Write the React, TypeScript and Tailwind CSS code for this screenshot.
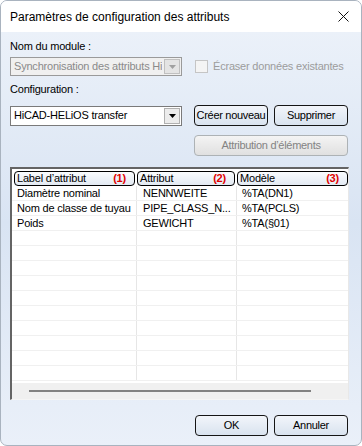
import React from "react";

const F = { fontFamily: '"Liberation Sans", Arial, sans-serif' };

function Arrow() {
  return (
    <svg width="7" height="4" viewBox="0 0 7 4">
      <path d="M0 0h7L3.5 4z" fill="currentColor" />
    </svg>
  );
}

function Btn({ children, disabled, w }: { children: React.ReactNode; disabled?: boolean; w: string }) {
  return (
    <div
      className={`${w} h-[21px] flex items-center justify-center rounded-[4px] border text-[11px] whitespace-nowrap tracking-[-0.3px] ${
        disabled
          ? "border-[#adb2b5] text-[#838383] bg-gradient-to-b from-[#f4f4f4] to-[#e0e0e0]"
          : "border-[#151515] text-black bg-gradient-to-b from-[#f2f5fa] to-[#d9e3ef]"
      }`}
    >
      {children}
    </div>
  );
}

function Header({ label, num, w }: { label: string; num: string; w: string }) {
  return (
    <div className={`${w} h-[15px] flex items-center justify-between border border-black rounded-[4px] px-[2px] bg-gradient-to-b from-[#fafcfe] to-[#e3eaf3] text-[11px]`}>
      <span>{label}</span>
      <span className="text-[#e00000] font-bold pr-[6px]">{num}</span>
    </div>
  );
}

const rows = [
  ["Diamètre nominal", "NENNWEITE", "%TA(DN1)"],
  ["Nom de classe de tuyau", "PIPE_CLASS_N...", "%TA(PCLS)"],
  ["Poids", "GEWICHT", "%TA(§01)"],
  ["", "", ""],
  ["", "", ""],
  ["", "", ""],
  ["", "", ""],
  ["", "", ""],
  ["", "", ""],
  ["", "", ""],
  ["", "", ""],
  ["", "", ""],
  ["", "", ""],
];

export default function App() {
  return (
    <div className="w-[362px] h-[446px] bg-white" style={F}>
      <div className="w-[362px] h-[446px] rounded-[7px] border border-[#a9b3bf] overflow-hidden flex flex-col bg-gradient-to-b from-[#eef3fa] via-[#d9e4f3] to-[#eaf0f9]">
        <div className="h-[31px] shrink-0 bg-white flex items-center justify-between pl-[9px] pr-[10px] text-[12px] text-black">
          <span className="pt-[1px]">Paramètres de configuration des attributs</span>
          <svg width="11" height="11" viewBox="0 0 11 11" className="mr-[2px]">
            <path d="M0.5 0.5L10.5 10.5M10.5 0.5L0.5 10.5" stroke="#111" strokeWidth="1" />
          </svg>
        </div>
        <div className="flex-1 flex flex-col px-[9px] text-[11px] text-black tracking-[-0.2px]">
          <div className="mt-[8px] leading-[13px]">Nom du module :</div>
          <div className="mt-[4px] flex items-center">
            <div className="w-[172px] h-[19px] border border-[#9a9a9a] bg-[#f0f0f0] flex items-center justify-between pl-[3px] pr-[1px]">
              <span className="text-[#8a8a8a] whitespace-nowrap overflow-hidden w-[148px]">Synchronisation des attributs HiCAD</span>
              <div className="w-[16px] h-[15px] border border-[#c0c0c0] bg-[#e4e4e4] flex items-center justify-center text-[#a0a0a0]">
                <Arrow />
              </div>
            </div>
            <div className="ml-[13px] w-[13px] h-[13px] border border-[#c5c5c5] bg-[#f4f4f4]" />
            <span className="ml-[5px] text-[#9c9c9c]">Écraser données existantes</span>
          </div>
          <div className="mt-[7px] leading-[13px]">Configuration :</div>
          <div className="mt-[9px] flex items-center">
            <div className="w-[172px] h-[20px] border border-[#7a7a7a] bg-white flex items-center justify-between pl-[3px] pr-[1px]">
              <span>HiCAD-HELiOS transfer</span>
              <div className="w-[16px] h-[16px] border border-[#b0b0b0] bg-[#ececec] flex items-center justify-center text-black">
                <Arrow />
              </div>
            </div>
            <div className="ml-[12px]">
              <Btn w="w-[74px]">Créer nouveau</Btn>
            </div>
            <div className="ml-[6px]">
              <Btn w="w-[74px]">Supprimer</Btn>
            </div>
          </div>
          <div className="mt-[9px] ml-[184px]">
            <Btn w="w-[154px]" disabled>
              Attribution d’éléments
            </Btn>
          </div>
          <div className="mt-[11px] w-[339px] h-[233px] border-l-2 border-t-2 border-[#646464] border-r border-r-[#e8e8e8] border-b border-b-[#f5f5f5] bg-white flex flex-col">
            <div className="flex gap-[2px] pl-[2px] pt-[2px] h-[17px] shrink-0">
              <Header label="Label d’attribut" num="(1)" w="w-[121px]" />
              <Header label="Attribut" num="(2)" w="w-[98px]" />
              <Header label="Modèle" num="(3)" w="w-[111px]" />
            </div>
            <div className="flex-1 overflow-hidden">
              {rows.map((r, i) => (
                <div key={i} className="flex h-[15px] border-b border-[#f0f0f0]">
                  <div className="w-[125px] pl-[5px] border-r border-[#e6e6e6] leading-[14px] whitespace-nowrap">{r[0]}</div>
                  <div className="w-[100px] pl-[6px] border-r border-[#e6e6e6] leading-[14px] whitespace-nowrap">{r[1]}</div>
                  <div className="flex-1 pl-[5px] leading-[14px] whitespace-nowrap">{r[2]}</div>
                </div>
              ))}
            </div>
            <div className="h-[16px] shrink-0 bg-[#f0f0f0] flex items-center pl-[17px]">
              <div className="w-[282px] h-[2px] bg-[#828282]" />
            </div>
          </div>
          <div className="mt-[15px] flex justify-end pr-[4px] gap-[6px]">
            <Btn w="w-[73px]">OK</Btn>
            <Btn w="w-[74px]">Annuler</Btn>
          </div>
        </div>
      </div>
    </div>
  );
}
